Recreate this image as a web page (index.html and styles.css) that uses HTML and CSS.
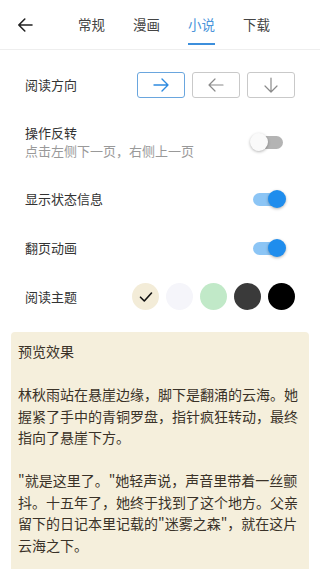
FILE: index.html
```html
<!DOCTYPE html>
<html lang="zh-CN">
<head>
<meta charset="utf-8">
<title>阅读设置</title>
<link rel="stylesheet" href="styles.css">
</head>
<body>
<header class="header">
  <div class="back">
    <svg width="16" height="16" viewBox="0 0 16 16"><path d="M15 8H1.8M7.8 2L1.8 8l6 6" fill="none" stroke="#222" stroke-width="1.6" stroke-linecap="round" stroke-linejoin="round"/></svg>
  </div>
  <nav class="tabs">
    <div class="tab">常规</div>
    <div class="tab">漫画</div>
    <div class="tab active">小说</div>
    <div class="tab">下载</div>
  </nav>
</header>
<main class="list">
  <div class="row">
    <div class="label">阅读方向</div>
    <div class="dirs">
      <div class="dir on"><svg width="16" height="14" viewBox="0 0 16 14"><path d="M1 7h14M9 1l6 6-6 6" fill="none" stroke="#2e8be0" stroke-width="1.4" stroke-linecap="round" stroke-linejoin="round"/></svg></div>
      <div class="dir"><svg width="16" height="14" viewBox="0 0 16 14"><path d="M15 7H1M7 1L1 7l6 6" fill="none" stroke="#8a8a8a" stroke-width="1.2" stroke-linecap="round" stroke-linejoin="round"/></svg></div>
      <div class="dir"><svg width="14" height="16" viewBox="0 0 14 16"><path d="M7 1v14M1 9l6 6 6-6" fill="none" stroke="#8a8a8a" stroke-width="1.2" stroke-linecap="round" stroke-linejoin="round"/></svg></div>
    </div>
  </div>
  <div class="row tall">
    <div class="texts">
      <div class="label">操作反转</div>
      <div class="sub">点击左侧下一页，右侧上一页</div>
    </div>
    <div class="switch"><span class="track"></span><span class="thumb"></span></div>
  </div>
  <div class="row">
    <div class="label">显示状态信息</div>
    <div class="switch checked"><span class="track"></span><span class="thumb"></span></div>
  </div>
  <div class="row">
    <div class="label">翻页动画</div>
    <div class="switch checked"><span class="track"></span><span class="thumb"></span></div>
  </div>
  <div class="row">
    <div class="label">阅读主题</div>
    <div class="themes">
      <div class="theme t1"><svg width="14" height="12" viewBox="0 0 14 12"><path d="M1.5 6.2l3.8 3.8L12.5 2" fill="none" stroke="#111" stroke-width="1.6" stroke-linecap="round" stroke-linejoin="round"/></svg></div>
      <div class="theme t2"></div>
      <div class="theme t3"></div>
      <div class="theme t4"></div>
      <div class="theme t5"></div>
    </div>
  </div>
</main>
<section class="preview">
  <p>预览效果</p>
  <p class="para">林秋雨站在悬崖边缘，脚下是翻涌的云海。她握紧了手中的青铜罗盘，指针疯狂转动，最终指向了悬崖下方。</p>
  <p class="para">"就是这里了。"她轻声说，声音里带着一丝颤抖。十五年了，她终于找到了这个地方。父亲留下的日记本里记载的"迷雾之森"，就在这片云海之下。</p>
</section>
</body>
</html>
```

FILE: styles.css
```css
* { box-sizing: border-box; }
html, body { margin: 0; padding: 0; background: #fff; }
body {
  font-family: "Noto Sans CJK SC", "Noto Sans", sans-serif;
  color: #333;
  width: 320px;
  overflow: hidden;
}
.header {
  height: 50px;
  display: flex;
  align-items: stretch;
  border-bottom: 1px solid #eeeeee;
}
.back {
  width: 50px;
  display: flex;
  align-items: center;
  justify-content: center;
}
.tabs {
  display: flex;
  margin-left: 14px;
}
.tab {
  width: 55px;
  display: flex;
  align-items: center;
  justify-content: center;
  font-size: 13.5px;
  color: #444;
  position: relative;
  padding-bottom: 2px;
}
.tab.active { color: #4a94da; }
.tab.active::after {
  content: "";
  position: absolute;
  left: 14px;
  right: 14px;
  top: 43px;
  height: 2px;
  background: #3d8fdc;
}
.list { padding-top: 10px; }
.row {
  height: 49px;
  display: flex;
  align-items: center;
  justify-content: space-between;
  padding: 0 25px;
}
.row.tall { height: 65px; }
.label {
  font-size: 13px;
  line-height: 18px;
  color: #333;
}
.sub {
  font-size: 13px;
  line-height: 18px;
  color: #999;
}
.dirs { display: flex; gap: 7px; }
.dir {
  width: 48px;
  height: 26px;
  border: 1px solid #c9c9c9;
  border-radius: 3px;
  display: flex;
  align-items: center;
  justify-content: center;
}
.dir.on { border-color: #6aa6de; }
.switch {
  position: relative;
  width: 36px;
  height: 20px;
  margin-right: 9px;
}
.track {
  position: absolute;
  left: 3px;
  right: 3px;
  top: 4px;
  height: 13px;
  border-radius: 7px;
  background: #b4b4b4;
}
.thumb {
  position: absolute;
  left: 0;
  top: 1px;
  width: 18px;
  height: 18px;
  border-radius: 50%;
  background: #fafafa;
  box-shadow: 0 1px 3px rgba(0,0,0,0.3);
}
.switch.checked .track { background: #8cc5f5; }
.switch.checked .thumb { left: 18px; background: #1f8ded; }
.themes { display: flex; gap: 7px; }
.theme {
  width: 27px;
  height: 27px;
  border-radius: 50%;
  display: flex;
  align-items: center;
  justify-content: center;
}
.t1 { background: #f3ecd8; }
.t2 { background: #f5f5fa; }
.t3 { background: #c1e9c8; }
.t4 { background: #3a3a3a; }
.t5 { background: #000; }
.preview {
  margin: 11px 11px 0;
  background: #f5efdc;
  border-radius: 4px;
  padding: 9px 7px 20px;
  font-size: 14px;
  line-height: 21.5px;
  color: #3a3228;
}
.preview p { margin: 0; }
.preview .para { margin-top: 21.5px; }
```
